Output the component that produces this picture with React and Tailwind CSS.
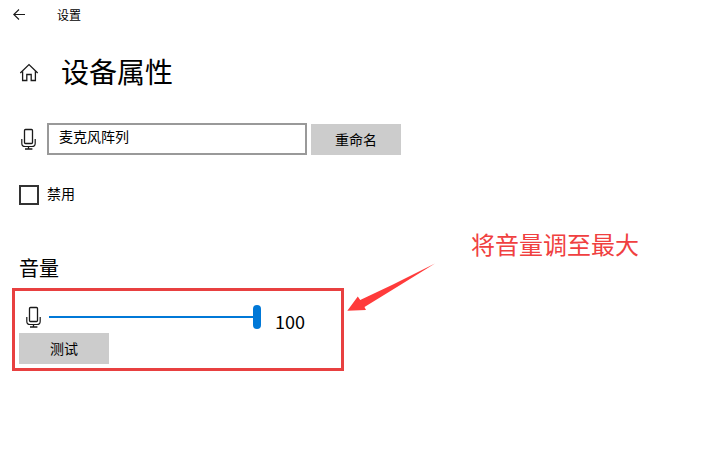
import { useState } from 'react';

const MicIcon = () => (
  <svg className="w-4 h-6 shrink-0" viewBox="0 0 16 24" fill="none" stroke="#1a1a1a" aria-hidden="true">
    <rect x="4.5" y="2.5" width="8" height="14" rx="1" strokeWidth="1.3" />
    <path d="M1.8 12v4.2q0 3.3 3.3 3.3h6.8q3.3 0 3.3-3.3V12" strokeWidth="1.2" />
    <path d="M8.5 19.5v2.2M5 22h7.4" strokeWidth="1.3" />
  </svg>
);

const BackIcon = () => (
  <svg className="w-3 h-3" viewBox="0 0 12 12" fill="none" stroke="#1a1a1a" strokeWidth="1.1" aria-hidden="true">
    <path d="M12 5.5H.8M6 .5l-5.2 5 5.2 5" />
  </svg>
);

const HomeIcon = () => (
  <svg className="w-5 h-5 shrink-0" viewBox="0 0 20 20" fill="none" stroke="#1a1a1a" strokeWidth="1.3" aria-hidden="true">
    <path d="M1.3 10 10 1.6l8.7 8.4" />
    <path d="M3.6 8.2v9.3h4.2v-6h4.4v6h4.2V8.2" />
  </svg>
);

const GrayButton = ({ children }) => (
  <button type="button" className="w-[90px] h-[31px] shrink-0 bg-[#cccccc] text-sm text-black">
    {children}
  </button>
);

const App = () => {
  const [name, setName] = useState('麦克风阵列');
  const [disabled, setDisabled] = useState(false);
  const [volume, setVolume] = useState(100);

  return (
    <div className="min-h-screen bg-white text-black font-['Open_Sans','Noto_Sans_CJK_SC',sans-serif]">
      {/* Title bar */}
      <header className="flex items-center h-[30px] pl-[13px] gap-8">
        <button type="button" aria-label="返回">
          <BackIcon />
        </button>
        <span className="text-xs pt-0.5">设置</span>
      </header>

      <main className="pl-[19px]">
        <div className="flex items-center gap-[22px] pt-[22px]">
          <a href="#home" aria-label="主页">
            <HomeIcon />
          </a>
          <h1 className="text-[28px] leading-10 pb-0.5">设备属性</h1>
        </div>

        {/* Device name */}
        <form className="flex items-end pt-[29px]" onSubmit={(e) => e.preventDefault()}>
          <label htmlFor="device-name" aria-label="设备名称" className="pl-px pr-[11px] pb-1">
            <MicIcon />
          </label>
          <input
            id="device-name"
            type="text"
            value={name}
            onChange={(e) => setName(e.target.value)}
            className="w-[260px] h-8 mr-1 border-2 border-[#999999] bg-white pl-2.5 pb-1.5 text-sm outline-none"
          />
          <GrayButton>重命名</GrayButton>
        </form>

        <div className="flex items-center gap-2 pt-[30px]">
          <input
            id="disable-device"
            type="checkbox"
            checked={disabled}
            onChange={(e) => setDisabled(e.target.checked)}
            className="w-5 h-5 appearance-none border-2 border-[#333333] checked:bg-[#0078d7]"
          />
          <label htmlFor="disable-device" className="text-sm leading-[18px] pb-0.5">
            禁用
          </label>
        </div>

        <div className="flex items-start pt-6">
          <section className="pt-[26px]">
            <h2 className="text-xl leading-7">音量</h2>
            <div className="w-[332px] -ml-[7px] mt-[5px] border-3 border-[#e84040] pl-1 pb-1">
              <div className="flex items-center h-[42px] pt-2.5">
                <label htmlFor="volume" aria-label="音量" className="pl-1.5 pr-2">
                  <MicIcon />
                </label>
                <input
                  id="volume"
                  type="range"
                  min="0"
                  max="100"
                  value={volume}
                  onChange={(e) => setVolume(Number(e.target.value))}
                  className="w-[212px] h-6 appearance-none bg-transparent [&::-webkit-slider-runnable-track]:h-0.5 [&::-webkit-slider-runnable-track]:bg-[#0078d7] [&::-webkit-slider-thumb]:appearance-none [&::-webkit-slider-thumb]:w-2 [&::-webkit-slider-thumb]:h-6 [&::-webkit-slider-thumb]:-mt-[11px] [&::-webkit-slider-thumb]:rounded-full [&::-webkit-slider-thumb]:bg-[#0078d7]"
                />
                <output htmlFor="volume" className="pl-3.5 pt-2 font-['Noto_Sans_CJK_SC',sans-serif] text-lg leading-6">
                  {volume}
                </output>
              </div>
              <GrayButton>测试</GrayButton>
            </div>
          </section>

          {/* Callout pointing at the volume box */}
          <svg className="w-[88px] h-12 ml-[3px] mt-[34px] shrink-0" viewBox="0 0 88 48" fill="#ff3b3b" aria-hidden="true">
            <path d="M88 .5 50 24 17.5 44l1.5 3L.3 47.7 10.8 33.5l2.4 3.6L46 21.5z" />
          </svg>
          <p className="pl-9 text-2xl leading-8 text-[#f04040] whitespace-nowrap">将音量调至最大</p>
        </div>
      </main>
    </div>
  );
};

export default App;
